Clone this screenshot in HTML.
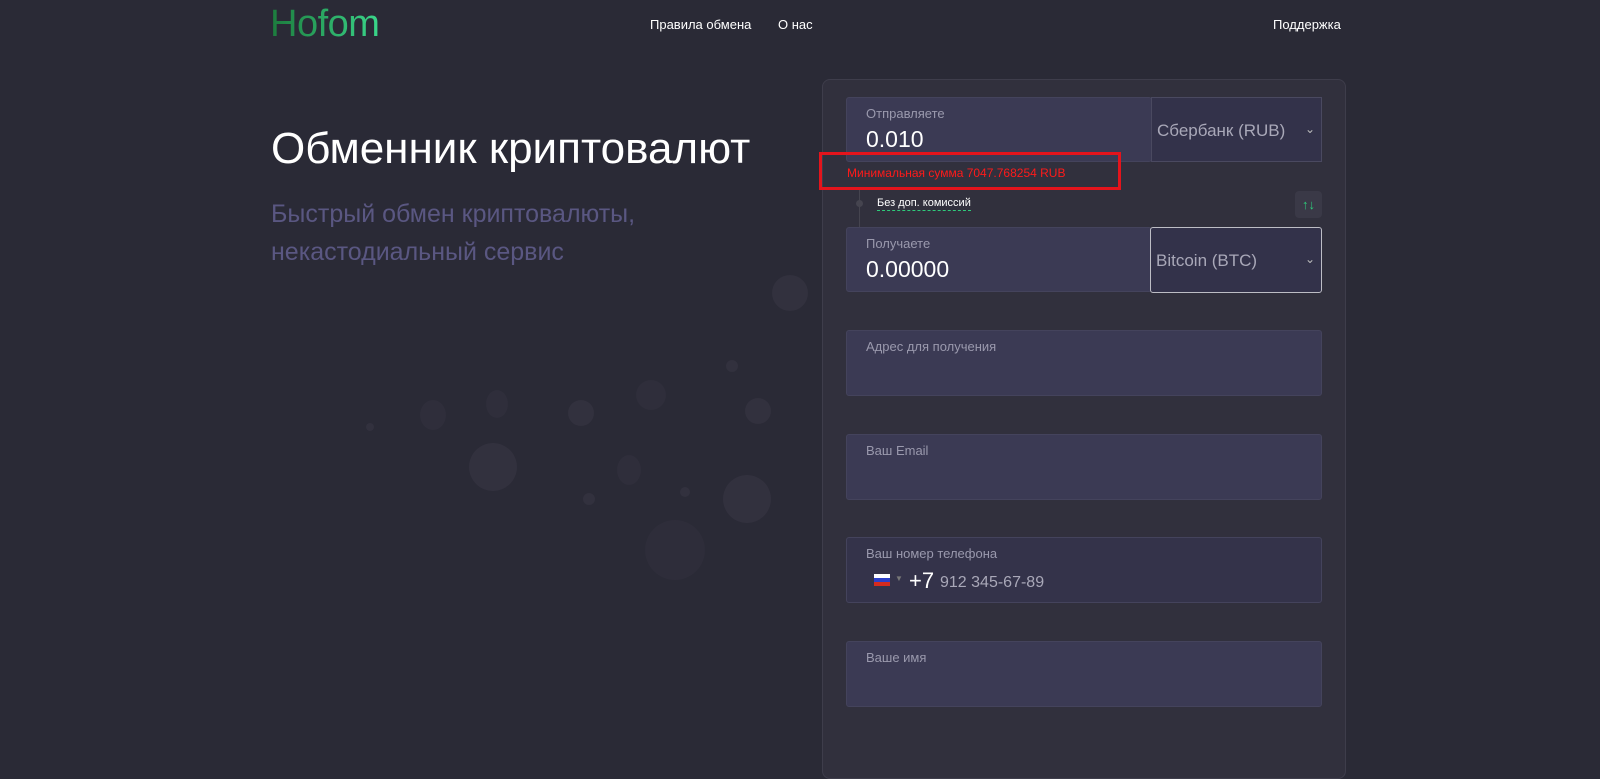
<!DOCTYPE html>
<html><head><meta charset="utf-8"><style>
*{margin:0;padding:0;box-sizing:border-box}
body{width:1600px;height:739px;overflow:hidden;background:#2a2a36;font-family:"Liberation Sans",sans-serif;position:relative;color:#fff}
.abs{position:absolute}
.logo{left:270px;top:3px;font-size:38px;font-weight:normal;letter-spacing:-0.5px;background:linear-gradient(90deg,#1c7a3c,#3ad68a);-webkit-background-clip:text;color:transparent}
.nav{top:17px;font-size:13px;color:#fff}
h1{position:absolute;left:271px;top:124px;font-size:44px;font-weight:normal;color:#fff}
.sub{left:271px;top:195px;font-size:25px;line-height:38px;color:#5a5782}
.panel{left:822px;top:79px;width:524px;height:700px;background:#31303d;border:1px solid #3e3d4b;border-radius:8px}
.inp{background:#3b3a54;border-radius:3px;border:1px solid #44435c}
.lbl{font-size:13px;color:#9a99ad;position:absolute;left:19px;top:8px}
.val{font-size:23px;position:absolute;left:19px;top:28px;color:#fff}
.sel{background:#33324a;border:1px solid #4a4960;font-size:17px;color:#a9a8b8;padding:23px 0 0 5px}
.chev{position:absolute;right:6px;top:24px;font-size:12px;color:#bbb}
.dot{position:absolute;border-radius:50%;background:#32313e}
</style></head><body>
<div class="abs logo">Hofom</div>
<div class="abs nav" style="left:650px">Правила обмена</div>
<div class="abs nav" style="left:778px">О нас</div>
<div class="abs nav" style="left:1273px">Поддержка</div>
<h1>Обменник криптовалют</h1>
<div class="abs sub">Быстрый обмен криптовалюты,<br>некастодиальный сервис</div>

<div class="dot" style="left:772px;top:275px;width:36px;height:36px"></div>
<div class="dot" style="left:469px;top:443px;width:48px;height:48px"></div>
<div class="dot" style="left:723px;top:475px;width:48px;height:48px"></div>
<div class="dot" style="left:568px;top:400px;width:26px;height:26px"></div>
<div class="dot" style="left:745px;top:398px;width:26px;height:26px"></div>
<div class="dot" style="left:420px;top:400px;width:26px;height:30px;background:#2f2e3b"></div>
<div class="dot" style="left:486px;top:390px;width:22px;height:28px;background:#2f2e3b"></div>
<div class="dot" style="left:636px;top:380px;width:30px;height:30px;background:#2f2e3b"></div>
<div class="dot" style="left:617px;top:455px;width:24px;height:30px;background:#2f2e3b"></div>
<div class="dot" style="left:645px;top:520px;width:60px;height:60px;background:#2e2d3a"></div>
<div class="dot" style="left:583px;top:493px;width:12px;height:12px"></div>
<div class="dot" style="left:680px;top:487px;width:10px;height:10px"></div>
<div class="dot" style="left:726px;top:360px;width:12px;height:12px"></div>
<div class="dot" style="left:366px;top:423px;width:8px;height:8px"></div>

<div class="abs panel"></div>
<div class="abs inp" style="left:846px;top:97px;width:306px;height:65px"><div class="lbl">Отправляете</div><div class="val">0.010</div></div>
<div class="abs sel" style="left:1151px;top:97px;width:171px;height:65px">Сбербанк (RUB)<span class="chev">⌄</span></div>
<div class="abs" style="left:819px;top:152px;width:302px;height:38px;border:3px solid #e4141c"></div>
<div class="abs" style="left:847px;top:166px;font-size:12px;color:#ff1a1a">Минимальная сумма 7047.768254 RUB</div>
<div class="abs" style="left:859px;top:190px;width:1px;height:40px;background:#45444f"></div>
<div class="abs" style="left:856px;top:200px;width:7px;height:7px;border-radius:50%;background:#45444f"></div>
<div class="abs" style="left:877px;top:197px;font-size:11px;color:#fff;border-bottom:1px dashed #2ecb7a;padding-bottom:1px">Без доп. комиссий</div>
<div class="abs" style="left:1295px;top:191px;width:27px;height:27px;background:#3a3947;border-radius:4px;color:#2ecb7a;font-size:13px;font-weight:bold;text-align:center;line-height:27px">↑↓</div>
<div class="abs inp" style="left:846px;top:227px;width:306px;height:65px"><div class="lbl">Получаете</div><div class="val">0.00000</div></div>
<div class="abs sel" style="left:1150px;top:227px;width:172px;height:66px;border-color:#bdbdc5;border-radius:3px">Bitcoin (BTC)<span class="chev">⌄</span></div>
<div class="abs inp" style="left:846px;top:330px;width:476px;height:66px"><div class="lbl">Адрес для получения</div></div>
<div class="abs inp" style="left:846px;top:434px;width:476px;height:66px"><div class="lbl">Ваш Email</div></div>
<div class="abs inp" style="left:846px;top:537px;width:476px;height:66px;background:#34334a"><div class="lbl">Ваш номер телефона</div>
<div class="abs" style="left:27px;top:36px;width:16px;height:12px;background:linear-gradient(#fff 33%,#2c3fc8 33% 66%,#d52b1e 66%)"></div>
<div class="abs" style="left:48px;top:36px;font-size:8px;color:#777">▼</div>
<div class="abs" style="left:62px;top:30px;font-size:22px;color:#fff">+7</div>
<div class="abs" style="left:93px;top:36px;font-size:16px;color:#a9a8b8">912 345-67-89</div></div>
<div class="abs inp" style="left:846px;top:641px;width:476px;height:66px"><div class="lbl">Ваше имя</div></div>
</body></html>
